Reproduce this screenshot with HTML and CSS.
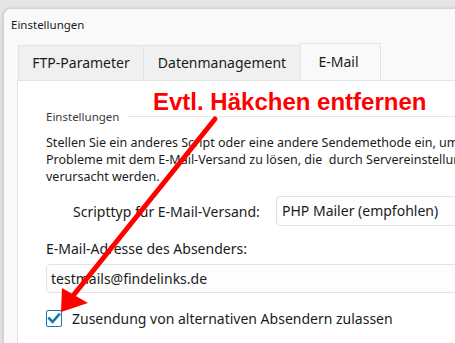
FILE: index.html
```html
<!DOCTYPE html>
<html lang="de">
<head>
    <meta charset="UTF-8">
    <title>Einstellungen</title>
    <link rel="stylesheet" href="styles.css">
</head>
<body>
    <div class="window">
        <div class="titlebar">Einstellungen</div>

        <div class="tabs">
            <div class="tab tab-ftp">FTP-Parameter</div>
            <div class="tab tab-data">Datenmanagement</div>
            <div class="tab tab-mail active">E-Mail</div>
        </div>

        <div class="panel">
            <div class="group-head">
                <span class="group-label">Einstellungen</span>
                <span class="group-line"></span>
            </div>

            <p class="hint">
                Stellen Sie ein anderes Script oder eine andere Sendemethode ein, um<br>
                Probleme mit dem E-Mail-Versand zu lösen, die&nbsp; durch Servereinstellungen<br>
                verursacht werden.
            </p>

            <div class="combo-row">
                <span class="combo-label">Scripttyp für E-Mail-Versand:</span>
                <div class="combo">PHP Mailer (empfohlen)</div>
            </div>

            <div class="field-label">E-Mail-Adresse des Absenders:</div>
            <div class="textbox">testmails@findelinks.de</div>

            <label class="check-row">
                <span class="checkbox">
                    <svg width="16" height="16" viewBox="0 0 16 16">
                        <path d="M3.2 8.4 L6.6 11.8 L13 4.6" fill="none" stroke="#1479a8" stroke-width="2.6" stroke-linecap="square"/>
                    </svg>
                </span>
                Zusendung von alternativen Absendern zulassen
            </label>
        </div>
    </div>

    <!-- annotation drawn over the screenshot -->
    <div class="note">Evtl. Häkchen entfernen</div>
    <svg class="arrow" width="455" height="343" viewBox="0 0 455 343">
        <line x1="215" y1="119" x2="72" y2="297" stroke="#ff0000" stroke-width="5" stroke-linecap="round"/>
        <polygon points="61,312 62,288 88,303" fill="#ff0000"/>
    </svg>
</body>
</html>
```

FILE: styles.css
```css
* {
    box-sizing: border-box;
}

body {
    margin: 0;
    background: #e6e6e6;
    overflow: hidden;
    font-family: "Noto Sans", "Open Sans", sans-serif;
    color: #1b1b1b;
}

.window {
    margin: 8px 0 0 3px;
    width: 640px;
    height: 400px;
    background: #f9f9f9;
    border: 1px solid #d4d4d4;
    border-radius: 8px 0 0 0;
    box-shadow: -1px 0 3px rgba(0, 0, 0, 0.12);
}

.titlebar {
    height: 35px;
    padding-left: 7px;
    font-size: 11.5px;
    line-height: 31px;
}

.tabs {
    display: flex;
    align-items: flex-end;
    height: 36px;
    padding-left: 14px;
}

.tab {
    height: 35px;
    background: #f0f0f0;
    border: 1px solid #e4e4e4;
    border-right: none;
    border-bottom: none;
    font-size: 14px;
    line-height: 33px;
    text-align: center;
    white-space: nowrap;
}

.tab-ftp {
    width: 125px;
}

.tab-data {
    width: 157px;
}

.tab-mail {
    width: 81px;
    padding-right: 4px;
}

.tab.active {
    height: 37px;
    background: #f9f9f9;
    border-right: 1px solid #e4e4e4;
    line-height: 36px;
}

.panel {
    margin-left: 13px;
    height: 320px;
    padding: 27px 0 0 28px;
    background: #fff;
    border-top: 1px solid #e4e4e4;
    border-left: 1px solid #e4e4e4;
}

.group-head {
    display: flex;
    align-items: center;
    height: 16px;
}

.group-label {
    font-size: 11.5px;
    color: #3a3a3a;
}

.group-line {
    flex: 1;
    height: 1px;
    margin-left: 8px;
    background: #e6e6e6;
}

.hint {
    margin: 10px 0 0;
    font-size: 12.5px;
    line-height: 17px;
    white-space: nowrap;
}

.combo-row {
    display: flex;
    align-items: center;
    margin-top: 11px;
}

.combo-label {
    width: 230px;
    padding-left: 27px;
    font-size: 14px;
}

.combo {
    width: 300px;
    height: 30px;
    padding-left: 5px;
    background: #fdfdfd;
    border: 1px solid #e2e2e2;
    border-radius: 4px;
    font-size: 14px;
    line-height: 28px;
}

.field-label {
    margin-top: 14px;
    font-size: 14px;
    line-height: 18px;
}

.textbox {
    width: 520px;
    height: 29px;
    margin-top: 6px;
    padding-left: 4px;
    background: #fdfdfd;
    border: 1px solid #e2e2e2;
    border-radius: 4px;
    font-size: 14px;
    line-height: 27px;
}

.check-row {
    display: flex;
    align-items: center;
    gap: 10px;
    margin-top: 16px;
    font-size: 14px;
}

.checkbox {
    display: block;
    width: 16px;
    height: 17px;
    border: 1.5px solid #1479a8;
    border-radius: 2px;
    background: #fff;
}

.checkbox svg {
    display: block;
    margin: -1px 0 0 -1.5px;
}

.note {
    position: absolute;
    left: 153px;
    top: 88px;
    font-family: "Liberation Sans", Arial, sans-serif;
    font-weight: bold;
    font-size: 24px;
    line-height: 28px;
    color: #ff0000;
}

.arrow {
    position: absolute;
    left: 0;
    top: 0;
    pointer-events: none;
}
```
